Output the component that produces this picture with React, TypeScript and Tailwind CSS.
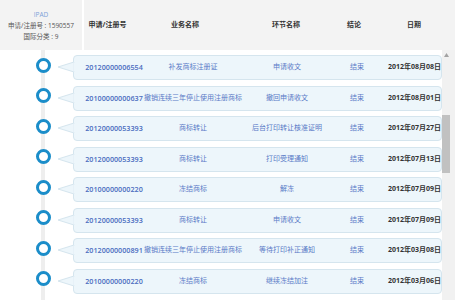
import React from "react"

const rows = [
  ["20120000006554", "补发商标注册证", "申请收文", "结束", "2012年08月08日"],
  ["20100000000637", "撤销连续三年停止使用注册商标", "撤回申请收文", "结束", "2012年08月01日"],
  ["20120000053393", "商标转让", "后台打印转让核准证明", "结束", "2012年07月27日"],
  ["20120000053393", "商标转让", "打印受理通知", "结束", "2012年07月13日"],
  ["20100000000220", "冻结商标", "解冻", "结束", "2012年07月09日"],
  ["20120000053393", "商标转让", "申请收文", "结束", "2012年07月09日"],
  ["20120000000891", "撤销连续三年停止使用注册商标", "等待打印补正通知", "结束", "2012年03月08日"],
  ["20100000000220", "冻结商标", "继续冻结加注", "结束", "2012年03月06日"],
]

export default function App() {
  return (
    <div className="flex h-[300px] w-[455px] flex-col overflow-hidden bg-white font-['Open_Sans','Noto_Sans_CJK_SC',sans-serif]">
      {/* 表头 */}
      <div className="flex h-[50px] shrink-0 items-center bg-[#f3f3f3]">
        <div className="flex h-full w-[84px] flex-col items-center justify-center gap-[2px] border-r-2 border-white text-[6.5px] leading-[9px] text-[#555]">
          <span className="text-[#7d9fd8]">IPAD</span>
          <span>申请/注册号 : 1590557</span>
          <span>国际分类 : 9</span>
        </div>
        <div className="flex text-[7px] font-bold text-[#333]">
          <span className="w-[47px] text-center whitespace-nowrap">申请/注册号</span>
          <span className="w-[108px] text-center">业务名称</span>
          <span className="w-[94px] text-center">环节名称</span>
          <span className="w-[42px] text-center">结论</span>
          <span className="w-[78px] text-center">日期</span>
        </div>
      </div>

      <div className="flex flex-1">
        <div className="relative flex-1">
          <div className="absolute inset-y-0 left-[41px] w-[4px] bg-[#eeeeee]" />
          <div className="relative flex flex-col gap-[5.5px] pt-[5px]">
            {rows.map((r, i) => (
              <div key={i} className="flex h-[25px]">
                <div className="w-[73px] shrink-0 pl-[35.5px] pt-[2.5px]">
                  <div className="h-[15px] w-[15px] rounded-full border-[3px] border-[#1b8dc9] bg-white" />
                </div>
                <div className="relative flex flex-1 items-center rounded-[4px] border border-[#d5e5ee] bg-[#edf6fb] text-[7px] whitespace-nowrap text-[#5a7bc7]">
                  <svg className="absolute left-[-17px] top-[5px]" width="18" height="12" viewBox="0 0 18 12">
                    <polygon points="17,1 1,6 17,11" fill="#edf6fb" stroke="#d5e5ee" strokeWidth="1" />
                    <rect x="16.5" y="1.5" width="2" height="9" fill="#edf6fb" />
                  </svg>
                  <span className="w-[80px] text-center text-[7.2px] font-semibold text-[#4a6cbf]">{r[0]}</span>
                  <span className="flex w-[78px] justify-center">{r[1]}</span>
                  <span className="flex w-[110px] justify-center">{r[2]}</span>
                  <span className="w-[30px] text-center">{r[3]}</span>
                  <span className="pl-[16px] font-bold text-[#333]">{r[4]}</span>
                </div>
              </div>
            ))}
          </div>
        </div>

        {/* 滚动条 */}
        <div className="relative w-[13px] shrink-0 bg-[#f1f1f1]">
          <svg className="absolute left-[2px] top-[3px]" width="5" height="4" viewBox="0 0 5 4">
            <polygon points="2.5,0 5,4 0,4" fill="#a3a3a3" />
          </svg>
          <div className="absolute left-0 top-[65px] h-[58px] w-[8px] bg-[#c1c1c1]" />
        </div>
      </div>
    </div>
  )
}
